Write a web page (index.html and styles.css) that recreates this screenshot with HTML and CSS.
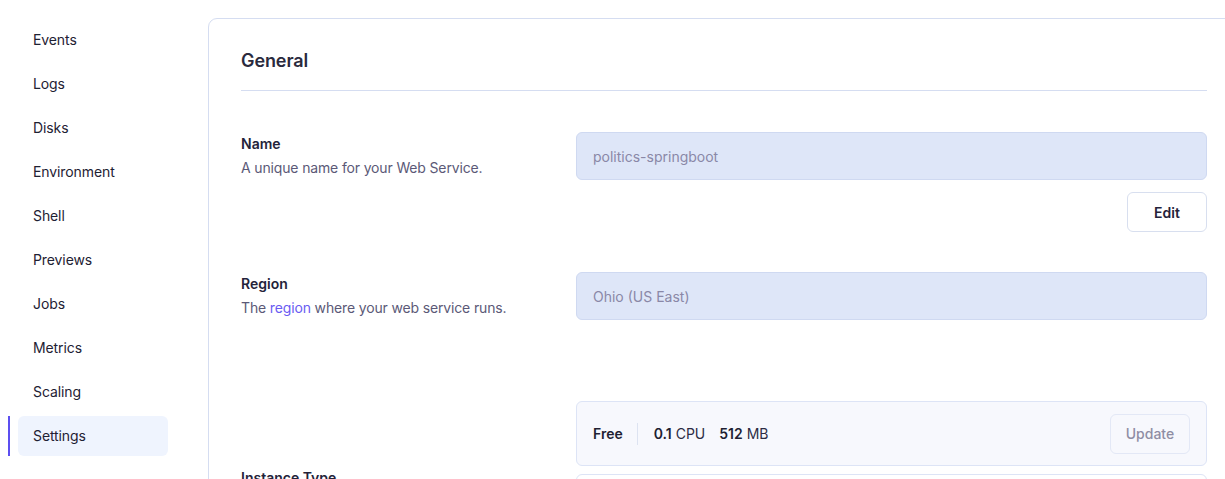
FILE: index.html
```html
<!DOCTYPE html>
<html lang="en">
<head>
<meta charset="utf-8">
<title>Settings</title>
<link rel="stylesheet" href="styles.css">
</head>
<body>
<div class="layout">
  <nav class="sidenav">
    <a class="nav-item">Events</a>
    <a class="nav-item">Logs</a>
    <a class="nav-item">Disks</a>
    <a class="nav-item">Environment</a>
    <a class="nav-item">Shell</a>
    <a class="nav-item">Previews</a>
    <a class="nav-item">Jobs</a>
    <a class="nav-item">Metrics</a>
    <a class="nav-item">Scaling</a>
    <a class="nav-item active">Settings</a>
  </nav>
  <main class="card">
    <h2 class="card-title">General</h2>
    <div class="field-row first">
      <div class="field-info">
        <div class="field-label">Name</div>
        <div class="field-desc">A unique name for your Web Service.</div>
      </div>
      <div class="field-control">
        <div class="input">politics-springboot</div>
        <div class="actions"><button class="btn">Edit</button></div>
      </div>
    </div>
    <div class="field-row">
      <div class="field-info">
        <div class="field-label">Region</div>
        <div class="field-desc">The <a class="link">region</a> where your web service runs.</div>
      </div>
      <div class="field-control">
        <div class="input">Ohio (US East)</div>
      </div>
    </div>
    <div class="field-row instance-row">
      <div class="field-info">
        <div class="field-label">Instance Type</div>
      </div>
      <div class="field-control">
        <div class="instance-box">
          <span class="plan">Free</span>
          <span class="sep"></span>
          <span class="spec"><b>0.1</b> CPU</span>
          <span class="spec"><b>512</b> MB</span>
          <button class="btn btn-disabled">Update</button>
        </div>
        <div class="instance-box next"></div>
      </div>
    </div>
  </main>
</div>
</body>
</html>
```

FILE: styles.css
```css
html, body {
  margin: 0;
  padding: 0;
  overflow: hidden;
  background: #ffffff;
}
body {
  font-family: Inter, "Noto Sans", "Liberation Sans", sans-serif;
  font-size: 14px;
  color: #24233a;
  width: 1225px;
  height: 479px;
}
.layout {
  display: flex;
  align-items: flex-start;
  width: 1400px;
  padding-top: 18px;
}
.sidenav {
  display: flex;
  flex-direction: column;
  gap: 4px;
  width: 160px;
  padding: 2px 0 0 18px;
  margin-right: 30px;
}
.nav-item {
  position: relative;
  display: flex;
  align-items: center;
  height: 40px;
  width: 150px;
  padding-left: 15px;
  padding-bottom: 2px;
  box-sizing: border-box;
  border-radius: 6px;
  color: #1e2133;
  font-size: 14px;
  letter-spacing: -0.1px;
}
.nav-item.active {
  background: #eff4fe;
}
.nav-item.active::before {
  content: "";
  position: absolute;
  left: -10px;
  top: 0;
  width: 2px;
  height: 40px;
  background: #5c4ff0;
}
.card {
  width: 966px;
  border: 1px solid #d5ddf1;
  border-radius: 9px;
  padding: 0 32px 40px 32px;
  flex: none;
}
.card-title {
  margin: 0;
  height: 72px;
  display: flex;
  align-items: center;
  padding-top: 11px;
  box-sizing: border-box;
  font-size: 18px;
  font-weight: 600;
  color: #2a2a3d;
  border-bottom: 1px solid #d5ddf1;
  letter-spacing: -0.1px;
}
.field-row {
  display: grid;
  grid-template-columns: 335px 1fr;
  margin-top: 40px;
}
.field-row.first {
  margin-top: 41px;
}
.field-info {
  padding-top: 2px;
}
.field-label {
  font-weight: 600;
  font-size: 14px;
  line-height: 20px;
  color: #24233a;
}
.field-desc {
  margin-top: 4px;
  line-height: 20px;
  color: #5b5977;
  letter-spacing: -0.15px;
}
.link {
  color: #6a5cf2;
}
.field-control {
  display: flex;
  flex-direction: column;
  gap: 12px;
}
.input {
  height: 48px;
  box-sizing: border-box;
  display: flex;
  align-items: center;
  padding-left: 16px;
  background: #dee6f8;
  border: 1px solid #cfd9f1;
  border-radius: 6px;
  color: #8a88a7;
  font-size: 14px;
}
.actions {
  display: flex;
  justify-content: flex-end;
}
.btn {
  font-family: inherit;
  height: 40px;
  width: 80px;
  background: #ffffff;
  border: 1px solid #d8dfef;
  border-radius: 6px;
  font-size: 14px;
  font-weight: 600;
  color: #24233a;
}
.instance-row {
  margin-top: 81px;
  align-items: center;
}
.instance-row .field-control {
  gap: 8px;
}
.instance-box {
  height: 65px;
  box-sizing: border-box;
  display: flex;
  align-items: center;
  padding: 0 16px;
  background: #f7f8fd;
  border: 1px solid #dde4f6;
  border-radius: 6px;
}
.instance-box.next {
  height: 78px;
  background: #ffffff;
}
.plan {
  font-weight: 600;
  color: #1f1f33;
}
.sep {
  width: 1px;
  height: 22px;
  background: #dde3f1;
  margin: 0 16px 0 14px;
}
.spec {
  color: #2c2c44;
  margin-right: 14px;
}
.spec b {
  font-weight: 600;
  color: #1f1f33;
}
.btn-disabled {
  margin-left: auto;
  background: #f7f8fd;
  border-color: #e3e8f6;
  color: #8f8da4;
  font-weight: 500;
}
```
